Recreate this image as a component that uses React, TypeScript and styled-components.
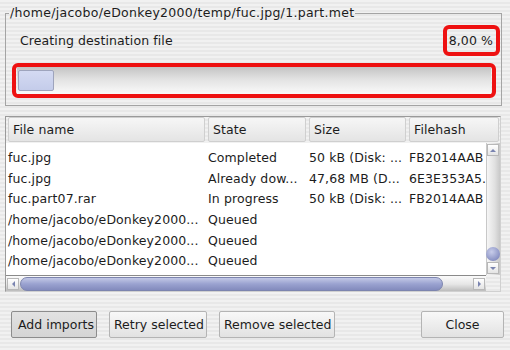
import styled, { createGlobalStyle } from "styled-components";

const GlobalStyle = createGlobalStyle`
  html, body {
    margin: 0;
    padding: 0;
  }
  body {
    font-family: "DejaVu Sans", "Liberation Sans", sans-serif;
    font-size: 12.5px;
    letter-spacing: 0.1px;
    color: #1c1c1c;
    background: repeating-linear-gradient(#f1f1f1 0 2px, #e8e8e8 2px 4px);
  }
`;

const Window = styled.div`
  width: 510px;
  height: 350px;
  box-sizing: border-box;
  padding: 5px 0 0 5px;
  display: flex;
  flex-direction: column;
  overflow: hidden;
`;

const GroupBox = styled.fieldset`
  margin: 0;
  width: 497px;
  box-sizing: border-box;
  border: 1px solid #a4a4a4;
  padding: 0 1px 7px 6px;
  display: flex;
  flex-direction: column;
`;

const Legend = styled.legend`
  padding: 0 1px;
  margin-left: -3px;
  line-height: 16px;
  height: 16px;
  letter-spacing: 0.3px;
`;

const StatusRow = styled.div`
  margin-top: 4px;
  height: 31px;
  display: flex;
  align-items: center;
  justify-content: space-between;
`;

const StatusLabel = styled.span`
  padding-left: 8px;
`;

const Highlight = styled.div`
  border: 4px solid #ee1111;
  border-radius: 6px;
  box-sizing: border-box;
`;

const PercentBox = styled(Highlight)`
  width: 57px;
  height: 31px;
  display: flex;
  align-items: center;
  justify-content: flex-end;
  padding-right: 3px;
`;

const ProgressRing = styled(Highlight)`
  margin-top: 7px;
  margin-right: 4px;
  height: 35px;
  padding: 0 1px;
`;

const Groove = styled.div`
  height: 27px;
  box-sizing: border-box;
  padding: 3px 1px;
  background: linear-gradient(#c4c4c4, #e2e2e2 45%, #fafafa);
`;

const Chunk = styled.div`
  height: 21px;
  box-sizing: border-box;
  border: 1px solid #9ea4bc;
  border-radius: 2px;
  background: linear-gradient(#d4daf2, #c4ccea);
`;

const ListFrame = styled.div`
  margin-top: 10px;
  width: 496px;
  height: 176px;
  box-sizing: border-box;
  border: 1px solid #9a9a9a;
  border-right-color: #d0d0d0;
  border-bottom-color: #d0d0d0;
  display: grid;
  grid-template-columns: 1fr 14px;
  grid-template-rows: 26px 1fr 16px;
  background: #ffffff;
`;

const HeaderRow = styled.div`
  grid-column: 1 / 3;
  display: grid;
  grid-template-columns: 200px 101px 100px 1fr;
  background: repeating-linear-gradient(#f1f1f1 0 2px, #e8e8e8 2px 4px);
  overflow: hidden;
`;

const HeaderCell = styled.div`
  margin: 0 1px 1px 2px;
  padding-left: 4px;
  border: 1px solid #cfcfcf;
  border-radius: 2px;
  background: linear-gradient(#f6f6f6, #e4e4e4);
  display: flex;
  align-items: center;
  white-space: nowrap;
`;

const Body = styled.div`
  padding-top: 4px;
  overflow: hidden;
`;

const Row = styled.div`
  height: 20.7px;
  display: grid;
  grid-template-columns: 200px 101px 100px 1fr;
  align-items: center;
`;

const Cell = styled.span`
  padding-left: 2px;
  white-space: nowrap;
  overflow: hidden;
`;

const VScroll = styled.div`
  display: flex;
  flex-direction: column;
  background: linear-gradient(90deg, #f6f6f6, #e0e0e0 60%, #c8c8c8);
  border-left: 1px solid #c8c8c8;
`;

const HScroll = styled.div`
  display: flex;
  align-items: center;
  padding: 0 1px;
  background: linear-gradient(#fbfbfb, #e6e6e6 55%, #bcbcbc);
  border-top: 1px solid #8a8a8a;
`;

const Corner = styled.div`
  background: repeating-linear-gradient(#f1f1f1 0 2px, #e8e8e8 2px 4px);
`;

const ArrowBox = styled.div<{ $dir: "up" | "down" | "left" | "right" }>`
  width: 12px;
  height: 12px;
  margin: 1px 0;
  box-sizing: border-box;
  border: 1px solid #b8b8b8;
  background: linear-gradient(#ffffff, #e4e4e4);
  display: flex;
  align-items: center;
  justify-content: center;
  flex: none;
  &::after {
    content: "";
    width: 0;
    height: 0;
    border: 3px solid transparent;
    ${(p) =>
      p.$dir === "up"
        ? "border-bottom-color: #7a84b0; border-top-width: 0;"
        : p.$dir === "down"
        ? "border-top-color: #7a84b0; border-bottom-width: 0;"
        : p.$dir === "left"
        ? "border-right-color: #7a84b0; border-left-width: 0;"
        : "border-left-color: #7a84b0; border-right-width: 0;"}
  }
`;

const VTrack = styled.div`
  flex: 1;
  display: flex;
  flex-direction: column;
  justify-content: flex-end;
`;

const Knob = styled.div`
  width: 14px;
  height: 14px;
  margin-left: -1px;
  border-radius: 50%;
  background: radial-gradient(circle at 40% 35%, #c8cdea, #8a92c4 70%, #6e76a6);
`;

const HThumb = styled.div`
  width: 423px;
  height: 14px;
  margin-left: 1px;
  box-sizing: border-box;
  border: 1px solid #7c84ae;
  border-radius: 7px;
  background: linear-gradient(#c2c8e6, #9aa2d0 50%, #838bbd);
`;

const HTrack = styled.div`
  flex: 1;
`;

const ButtonRow = styled.div`
  margin-top: 19px;
  padding-left: 6px;
  display: flex;
  gap: 12px;
`;

const Button = styled.button<{ $width: number; $pressed?: boolean }>`
  width: ${(p) => p.$width}px;
  height: 27px;
  padding: 0 4px 0 ${(p) => (p.$pressed ? 6 : 4)}px;
  font: inherit;
  color: #1c1c1c;
  white-space: nowrap;
  overflow: hidden;
  text-align: ${(p) => (p.$pressed ? "left" : "center")};
  border: 1px solid ${(p) => (p.$pressed ? "#8c8c8c" : "#b4b4b4")};
  border-radius: 2px;
  background: ${(p) =>
    p.$pressed
      ? "linear-gradient(#e2e2e2, #d4d4d4)"
      : "linear-gradient(#f8f8f8, #e2e2e2)"};
`;

const Spacer = styled.div`
  flex: 1;
`;

const rows = [
  ["fuc.jpg", "Completed", "50 kB (Disk: ...", "FB2014AAB"],
  ["fuc.jpg", "Already dow...", "47,68 MB (D...", "6E3E353A5..."],
  ["fuc.part07.rar", "In progress", "50 kB (Disk: ...", "FB2014AAB"],
  ["/home/jacobo/eDonkey2000...", "Queued", "", ""],
  ["/home/jacobo/eDonkey2000...", "Queued", "", ""],
  ["/home/jacobo/eDonkey2000...", "Queued", "", ""],
];

export default function App() {
  return (
    <>
      <GlobalStyle />
      <Window>
        <GroupBox>
          <Legend>/home/jacobo/eDonkey2000/temp/fuc.jpg/1.part.met</Legend>
          <StatusRow>
            <StatusLabel>Creating destination file</StatusLabel>
            <PercentBox>8,00 %</PercentBox>
          </StatusRow>
          <ProgressRing>
            <Groove>
              <Chunk style={{ width: "36px" }} />
            </Groove>
          </ProgressRing>
        </GroupBox>

        <ListFrame>
          <HeaderRow>
            <HeaderCell>File name</HeaderCell>
            <HeaderCell>State</HeaderCell>
            <HeaderCell>Size</HeaderCell>
            <HeaderCell>Filehash</HeaderCell>
          </HeaderRow>
          <Body>
            {rows.map((r, i) => (
              <Row key={i}>
                {r.map((c, j) => (
                  <Cell key={j}>{c}</Cell>
                ))}
              </Row>
            ))}
          </Body>
          <VScroll>
            <ArrowBox $dir="up" />
            <VTrack>
              <Knob />
            </VTrack>
            <ArrowBox $dir="down" />
          </VScroll>
          <HScroll>
            <ArrowBox $dir="left" />
            <HThumb />
            <HTrack />
            <ArrowBox $dir="right" />
          </HScroll>
          <Corner />
        </ListFrame>

        <ButtonRow>
          <Button $width={86} $pressed>
            Add imports
          </Button>
          <Button $width={98}>Retry selected</Button>
          <Button $width={116}>Remove selected</Button>
          <Spacer />
          <Button $width={83} style={{ marginRight: "6px" }}>
            Close
          </Button>
        </ButtonRow>
      </Window>
    </>
  );
}
